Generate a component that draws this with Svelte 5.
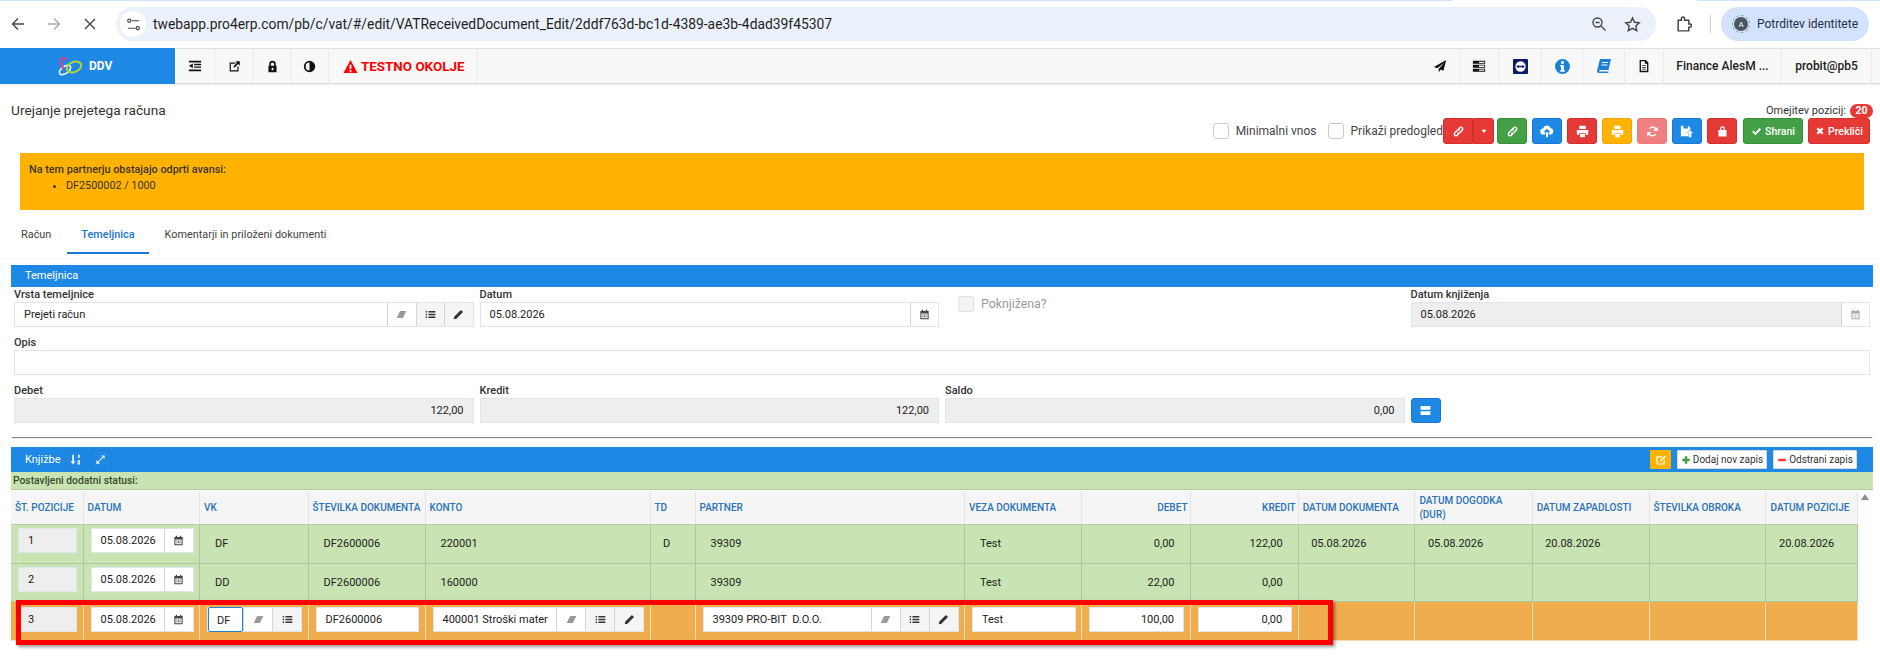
<script>
  // icon shapes on a 16x16 box: f = filled (evenodd), s = stroked
  const icons = {
    outdent: { f: 'M1 2h14v2H1z M7 5.5h8v1.5H7z M7 8.5h8V10H7z M1 12h14v2H1z M5.5 5v5.5L1 7.7z' },
    external: { f: 'M2 3h7v1.5H3.5v8h8V8H13v6H2z M9 1.5h5.5V7l-2-2L8 9.5 6.5 8 11 3.5z' },
    lock: { f: 'M4 7V5a4 4 0 0 1 8 0v2h1v8H3V7z M6 7h4V5a2 2 0 0 0-4 0z M7 9.5v3h2v-3z' },
    adjust: { f: 'M8 1a7 7 0 1 0 0 14A7 7 0 0 0 8 1z M8 3.2v9.6a4.8 4.8 0 0 1 0-9.6z' },
    warning: { f: 'M8 1l7.5 14H.5z M7 6v5h2V6z M7 12v2h2v-2z' },
    send: { f: 'M15 1L1 9l4 1.5L13 4 6.5 11.5V15l2.5-3 3 1.5z' },
    server: { f: 'M1 2h14v3.5H1z M1 6.5h14V10H1z M1 11h14v3.5H1z M8 3h6v1.5H8z M8 7.5h6V9H8z M8 12h6v1.5H8z' },
    info: { f: 'M8 0a8 8 0 1 0 0 16A8 8 0 0 0 8 0z M6.5 2.5h3V5h-3z M5.5 6.5h4V12h1v1.5h-5V12h1V8h-1z' },
    book: { f: 'M4 1h11l-2.5 11H3.5a1 1 0 0 0 0 1.5h9l-.3 1.5H3A2 2 0 0 1 1 13z M6 4l-.2 1h6l.2-1z M5.5 6.5l-.2 1h6l.2-1z' },
    file: { f: 'M3 1h7l3 3v11H3z M4.5 2.5v11h7v-8H9v-3z M6 7h4v1H6z M6 9h4v1H6z M6 11h4v1H6z' },
    link: { s: 'M7.5 5.5l2-2a2.100 2.100 0 0 1 3 3l-3 3a2.100 2.100 0 0 1-3 0 M8.500 10.500l-2 2a2.100 2.100 0 0 1-3-3l3-3a2.100 2.100 0 0 1 3 0' },
    caret: { f: 'M4 6h8l-4 5z' },
    cloud: { f: 'M4 12a3.5 3.5 0 0 1-.5-7A4.5 4.5 0 0 1 12 4.5 3.8 3.8 0 0 1 12 12h-2V9.5h2L8 5.5l-4 4h2V12z M6.8 9.5h2.4V15H6.8z' },
    print: { f: 'M4 1h8v4H4z M1 6h14v6h-3v-2H4v2H1z M5 11h6v4H5z' },
    refresh: { s: 'M13 6.5A5.2 5.2 0 0 0 4 4.5 M3 9.5a5.2 5.2 0 0 0 9 2', f: 'M14.5 2v5.5H9z M1.5 14V8.5H7z' },
    floppy: { f: 'M1 2h3v3h5V2h.5L12 4.500V6L7.500 10.500h2V14H1z M11.500 7l3.500 3.500h-2V15h-3v-4.500h-2z' },
    bag: { f: 'M5 6V4.500a3 3 0 0 1 6 0V6h2v8H3V6z M6.500 6h3V4.500a1.500 1.500 0 0 0-3 0z' },
    check: { f: 'M1.5 8.5l2-2 3 3 6-6.5 2 2L6.5 13.5z' },
    times: { f: 'M2.5 5l2.5-2.5 3 3 3-3L13.5 5l-3 3 3 3-2.5 2.500-3-3-3 3L2.500 11l3-3z' },
    eraser: { f: 'M6 3h9l-5 10H1z' },
    list: { f: 'M1 3h2v2H1z M5 3h10v2H5z M1 7h2v2H1z M5 7h10v2H5z M1 11h2v2H1z M5 11h10v2H5z' },
    pencil: { f: 'M11.500 1.500l3 3L5 14l-4 1 1-4z' },
    calendar: { f: 'M2 3h2V1h2v2h4V1h2v2h2v12H2z M3.500 6.500v7h9v-7z M5 8h1.500v1.500H5z M7.300 8h1.500v1.500H7.300z M9.500 8H11v1.500H9.500z M5 10.500h1.500V12H5z M7.300 10.500h1.500V12H7.300z M9.500 10.500H11V12H9.500z' },
    equals: { f: 'M2 2.500h12v4.500H2z M2 9h12v4.500H2z' },
    sort: { f: 'M4 2h2v8h2l-3 4-3-4h2z M11 2h2v4h-2z M10.500 9h3v5h-3z M11.500 10.500v2h1v-2z' },
    expand: { f: 'M9 2h5v5l-2-2-7 7 2 2H2V9l2 2 7-7z' },
    edit: { f: 'M2 3h8L8.500 4.500h-5v8h8v-4L13 7v7H2z M13 2l1.500 1.500L8 10H6.500V8.500z' },
    plus: { f: 'M6 2h4v4h4v4h-4v4H6v-4H2V6h4z' },
    minus: { f: 'M2 6h12v4H2z' }
  };

  const columns = [
    { label: 'Št. pozicije', w: 72.5 },
    { label: 'Datum', w: 116.5 },
    { label: 'VK', w: 108.5 },
    { label: 'Številka dokumenta', w: 117 },
    { label: 'Konto', w: 225 },
    { label: 'TD', w: 45 },
    { label: 'Partner', w: 269.5 },
    { label: 'Veza dokumenta', w: 117 },
    { label: 'Debet', w: 108.5, right: true },
    { label: 'Kredit', w: 108.2, right: true },
    { label: 'Datum dokumenta', w: 116.7 },
    { label: 'Datum dogodka (DUR)', w: 117.3 },
    { label: 'Datum zapadlosti', w: 116.9 },
    { label: 'Številka obroka', w: 116.9 },
    { label: 'Datum pozicije', w: 91.5 }
  ];
  const gridCols = columns.map((c) => c.w + 'px').join(' ');

  const rows = [
    { poz: '1', vk: 'DF', doc: 'DF2600006', konto: '220001', td: 'D', partner: '39309', veza: 'Test', debet: '0,00', kredit: '122,00', d1: '05.08.2026', d2: '05.08.2026', d3: '20.08.2026', obrok: '', d4: '20.08.2026' },
    { poz: '2', vk: 'DD', doc: 'DF2600006', konto: '160000', td: '', partner: '39309', veza: 'Test', debet: '22,00', kredit: '0,00', d1: '', d2: '', d3: '', obrok: '', d4: '' }
  ];
</script>

{#snippet icon(name, size = 12)}
  <svg class="ico" viewBox="0 0 16 16" width={size} height={size} aria-hidden="true">
    {#if icons[name].s}
      <path d={icons[name].s} fill="none" stroke="currentColor" stroke-width="1.800" />
    {/if}
    {#if icons[name].f}
      <path d={icons[name].f} fill="currentColor" fill-rule="evenodd" />
    {/if}
  </svg>
{/snippet}

{#snippet addons(list)}
  {#each list as a}
    <span class="addon" class:shaded={a !== 'eraser' && a !== 'calendar'} class:soft={a === 'eraser'}>{@render icon(a, 11)}</span>
  {/each}
{/snippet}

{#snippet dateInput()}
  <div class="field"><span class="value">05.08.2026</span>{@render addons(['calendar'])}</div>
{/snippet}

<div class="page">
  <header class="browser">
    <div class="strip"><span class="strip-a"></span><span class="strip-b"></span></div>
    <div class="browser-row">
      <div class="nav-btns">
        <svg viewBox="0 0 16 16" width="16" height="16"><path d="M14 8H2.500M8 2.500L2.500 8 8 13.500" fill="none" stroke="#444" stroke-width="1.400" /></svg>
        <svg viewBox="0 0 16 16" width="16" height="16"><path d="M2 8h11.500M8 2.500L13.500 8 8 13.500" fill="none" stroke="#aaa" stroke-width="1.400" /></svg>
        <svg viewBox="0 0 16 16" width="16" height="16"><path d="M3 3l10 10M13 3L3 13" fill="none" stroke="#444" stroke-width="1.400" /></svg>
      </div>
      <div class="address">
        <span class="tune">
          <svg viewBox="0 0 16 16" width="15" height="15"><path d="M6 4h8M2 12h8" fill="none" stroke="#444" stroke-width="1.300" /><circle cx="3.500" cy="4" r="1.700" fill="none" stroke="#444" stroke-width="1.200" /><circle cx="12.500" cy="12" r="1.700" fill="none" stroke="#444" stroke-width="1.200" /></svg>
        </span>
        <span class="url">twebapp.pro4erp.com/pb/c/vat/#/edit/VATReceivedDocument_Edit/2ddf763d-bc1d-4389-ae3b-4dad39f45307</span>
        <span class="addr-icons">
          <svg viewBox="0 0 16 16" width="16" height="16"><circle cx="6.500" cy="6.500" r="4.500" fill="none" stroke="#444" stroke-width="1.400" /><path d="M10 10l4.500 4.500M4.500 6.500h4" fill="none" stroke="#444" stroke-width="1.400" /></svg>
          <svg viewBox="0 0 16 16" width="17" height="17"><path d="M8 1.800l1.900 4.100 4.500.5-3.300 3 .9 4.400L8 11.600l-4 2.200.9-4.400-3.300-3 4.500-.5z" fill="none" stroke="#444" stroke-width="1.300" /></svg>
        </span>
      </div>
      <svg class="puzzle" viewBox="0 0 16 16" width="17" height="17"><path d="M3 4h3V2.500a1.500 1.500 0 0 1 3 0V4h4v3.500h1a1.500 1.500 0 0 1 0 3h-1V14H3z" fill="none" stroke="#444" stroke-width="1.400" /></svg>
      <span class="divider"></span>
      <div class="profile">
        <span class="avatar">A</span>
        <span>Potrditev identitete</span>
      </div>
    </div>
  </header>

  <nav class="topnav">
    <div class="brand">
      <svg viewBox="0 0 26 20" width="26" height="20">
        <ellipse cx="8" cy="14" rx="6.500" ry="3.500" transform="rotate(-35 8 14)" fill="none" stroke="#e6f0ff" stroke-width="1.700" />
        <path d="M7 13C2 8 3 2 6 2c2 0 3 1 4 2.500" fill="none" stroke="#d6408f" stroke-width="2" />
        <ellipse cx="17" cy="11" rx="7.500" ry="5" transform="rotate(-22 17 11)" fill="none" stroke="#b6d334" stroke-width="2" />
      </svg>
      <b>DDV</b>
    </div>
    <span class="nav-item w40">{@render icon('outdent', 14)}</span>
    <span class="nav-item w39">{@render icon('external', 13)}</span>
    <span class="nav-item w37">{@render icon('lock', 13)}</span>
    <span class="nav-item w38">{@render icon('adjust', 13)}</span>
    <span class="nav-item testno"><span class="warn">{@render icon('warning', 15)}</span>TESTNO OKOLJE</span>
    <span class="nav-fill"></span>
    <span class="nav-item w40">{@render icon('send', 14)}</span>
    <span class="nav-item w39">{@render icon('server', 14)}</span>
    <span class="nav-item w43">
      <svg viewBox="0 0 16 16" width="15" height="15"><rect width="16" height="16" rx="1" fill="#0c1a6b" /><circle cx="8" cy="8" r="5.500" fill="#fff" /><path d="M3.500 8L6 6v1.200h4V6l2.500 2L10 10V8.800H6V10z" fill="#0c1a6b" /></svg>
    </span>
    <span class="nav-item w41 blue">{@render icon('info', 15)}</span>
    <span class="nav-item w42 blue">{@render icon('book', 16)}</span>
    <span class="nav-item w39">{@render icon('file', 14)}</span>
    <span class="nav-item user w118">Finance AlesM ...</span>
    <span class="nav-item user w90">probit@pb5</span>
    <span class="nav-end"></span>
  </nav>

  <section class="toolbar">
    <h1>Urejanje prejetega računa</h1>
    <div class="tools">
      <div class="limit">Omejitev pozicij: <span class="badge">20</span></div>
      <div class="actions">
        <label class="check"><input type="checkbox" />Minimalni vnos</label>
        <label class="check second"><input type="checkbox" />Prikaži predogled</label>
        <div class="split">
          <button class="btn red">{@render icon('link', 13)}</button>
          <button class="btn red caret">{@render icon('caret', 10)}</button>
        </div>
        <button class="btn green">{@render icon('link', 13)}</button>
        <button class="btn blue-btn">{@render icon('cloud', 14)}</button>
        <button class="btn red">{@render icon('print', 13)}</button>
        <button class="btn amber">{@render icon('print', 13)}</button>
        <button class="btn salmon">{@render icon('refresh', 13)}</button>
        <button class="btn blue-btn">{@render icon('floppy', 14)}</button>
        <button class="btn red">{@render icon('bag', 13)}</button>
        <button class="btn green wide">{@render icon('check', 11)} Shrani</button>
        <button class="btn red wide2">{@render icon('times', 10)} Prekliči</button>
      </div>
    </div>
  </section>

  <div class="alert">
    <strong>Na tem partnerju obstajajo odprti avansi:</strong>
    <ul><li>DF2500002 / 1000</li></ul>
  </div>

  <div class="tabs">
    <span class="tab">Račun</span>
    <span class="tab active">Temeljnica</span>
    <span class="tab">Komentarji in priloženi dokumenti</span>
  </div>

  <section class="panel">
    <div class="bar">Temeljnica</div>
    <div class="form">
      <div class="group">
        <span class="lbl">Vrsta temeljnice</span>
        <div class="field"><span class="value">Prejeti račun</span>{@render addons(['eraser', 'list', 'pencil'])}</div>
      </div>
      <div class="group">
        <span class="lbl">Datum</span>
        {@render dateInput()}
      </div>
      <div class="group poknjizena">
        <label class="check muted"><input type="checkbox" disabled />Poknjižena?</label>
      </div>
      <div class="group">
        <span class="lbl">Datum knjiženja</span>
        <div class="field off"><span class="value">05.08.2026</span><span class="addon pale">{@render icon('calendar', 11)}</span></div>
      </div>
      <div class="group full">
        <span class="lbl">Opis</span>
        <div class="field"><span class="value"></span></div>
      </div>
      <div class="group">
        <span class="lbl">Debet</span>
        <div class="field off"><span class="value num">122,00</span></div>
      </div>
      <div class="group">
        <span class="lbl">Kredit</span>
        <div class="field off"><span class="value num">122,00</span></div>
      </div>
      <div class="group">
        <span class="lbl">Saldo</span>
        <div class="field off"><span class="value num">0,00</span></div>
      </div>
      <div class="group">
        <span class="lbl">&nbsp;</span>
        <button class="btn blue-btn eq">{@render icon('equals', 13)}</button>
      </div>
    </div>
  </section>

  <section class="entries">
    <div class="bar entries-bar">
      <span>Knjižbe</span>
      <span class="bar-btn">{@render icon('sort', 13)}</span>
      <span class="bar-btn">{@render icon('expand', 11)}</span>
      <span class="bar-fill"></span>
      <span class="mini amber">{@render icon('edit', 12)}</span>
      <span class="mini plain add"><span class="plus">{@render icon('plus', 10)}</span>Dodaj nov zapis</span>
      <span class="mini plain del"><span class="minus">{@render icon('minus', 10)}</span>Odstrani zapis</span>
    </div>
    <div class="statuses">Postavljeni dodatni statusi:</div>
    <div class="scroller">
      <div class="table">
        <div class="row head" style="grid-template-columns: {gridCols}">
          {#each columns as c}
            <div class="th" class:right={c.right}>{c.label}</div>
          {/each}
        </div>

        {#each rows as r}
          <div class="row body" style="grid-template-columns: {gridCols}">
            <div class="td box"><div class="field off"><span class="value">{r.poz}</span></div></div>
            <div class="td box">{@render dateInput()}</div>
            <div class="td">{r.vk}</div>
            <div class="td">{r.doc}</div>
            <div class="td">{r.konto}</div>
            <div class="td tight">{r.td}</div>
            <div class="td">{r.partner}</div>
            <div class="td">{r.veza}</div>
            <div class="td end">{r.debet}</div>
            <div class="td end">{r.kredit}</div>
            <div class="td tight">{r.d1}</div>
            <div class="td tight">{r.d2}</div>
            <div class="td tight">{r.d3}</div>
            <div class="td tight">{r.obrok}</div>
            <div class="td tight">{r.d4}</div>
          </div>
        {/each}

        <div class="row body editing" style="grid-template-columns: {gridCols}">
          <div class="td box"><div class="field off"><span class="value">3</span></div></div>
          <div class="td box">{@render dateInput()}</div>
          <div class="td box">
            <div class="field"><span class="value focused">DF</span>{@render addons(['eraser', 'list'])}</div>
          </div>
          <div class="td box"><div class="field"><span class="value">DF2600006</span></div></div>
          <div class="td box">
            <div class="field"><span class="value clip">400001 Stroški materiala</span>{@render addons(['eraser', 'list', 'pencil'])}</div>
          </div>
          <div class="td"></div>
          <div class="td box">
            <div class="field"><span class="value">39309 PRO-BIT&nbsp; D.O.O.</span>{@render addons(['eraser', 'list', 'pencil'])}</div>
          </div>
          <div class="td box"><div class="field"><span class="value">Test</span></div></div>
          <div class="td box"><div class="field"><span class="value num">100,00</span></div></div>
          <div class="td box"><div class="field"><span class="value num">0,00</span></div></div>
          <div class="td"></div>
          <div class="td"></div>
          <div class="td"></div>
          <div class="td"></div>
          <div class="td"></div>
          <div class="marker"></div>
        </div>
      </div>
      <div class="scrollbar"><span class="arrow"></span></div>
    </div>
  </section>
</div>

<style>
  :global(body) {
    margin: 0;
    background: #fff;
    overflow: hidden;
  }

  .page {
    width: 1880px;
    height: 656px;
    overflow: hidden;
    font-family: Roboto, "Liberation Sans", sans-serif;
    font-size: 12px;
    color: #333;
  }

  .ico {
    display: block;
    flex: none;
  }

  /* browser chrome */
  .browser {
    height: 48px;
    background: #fff;
  }

  .strip {
    display: flex;
    justify-content: space-between;
    height: 1px;
  }

  .strip-a {
    width: 1452px;
    background: #d3e3fd;
  }

  .strip-b {
    width: 183px;
    background: #d3e3fd;
  }

  .browser-row {
    display: flex;
    align-items: center;
    height: 34px;
    margin-top: 6px;
  }

  .nav-btns {
    display: flex;
    gap: 20px;
    width: 116px;
    padding-left: 10px;
    box-sizing: border-box;
  }

  .address {
    display: flex;
    align-items: center;
    width: 1540px;
    height: 34px;
    border-radius: 17px;
    background: #ebf1fa;
  }

  .tune {
    display: flex;
    align-items: center;
    justify-content: center;
    width: 26px;
    height: 26px;
    margin-left: 4px;
    border-radius: 50%;
    background: #fff;
  }

  .url {
    margin-left: 7px;
    font-size: 13.850px;
    color: #1f1f1f;
  }

  .addr-icons {
    display: flex;
    align-items: center;
    gap: 17px;
    margin-left: auto;
    margin-right: 15px;
  }

  .puzzle {
    margin-left: 19px;
  }

  .divider {
    width: 1px;
    height: 18px;
    margin: 0 10px 0 18px;
    background: #c9ccd1;
  }

  .profile {
    display: flex;
    align-items: center;
    gap: 9px;
    width: 148px;
    height: 34px;
    padding-left: 13px;
    box-sizing: border-box;
    border-radius: 17px;
    background: #d3e3fd;
    font-size: 12px;
    color: #1f2d45;
    white-space: nowrap;
  }

  .avatar {
    display: flex;
    align-items: center;
    justify-content: center;
    flex: none;
    width: 14px;
    height: 14px;
    border-radius: 50%;
    background: #4a5560;
    outline: 1px dashed #7d93b2;
    outline-offset: 1px;
    font-size: 8px;
    color: #fff;
  }

  /* app navbar */
  .topnav {
    display: flex;
    height: 36px;
    box-sizing: border-box;
    background: #f8f8f8;
    border-top: 1px solid #e2e2e2;
    border-bottom: 1px solid #dcdcdc;
    box-shadow: 0 1px 2px rgba(0, 0, 0, 0.08);
    color: #111;
  }

  .brand {
    display: flex;
    align-items: center;
    gap: 6px;
    width: 175px;
    padding-left: 57px;
    box-sizing: border-box;
    margin-top: -1px;
    height: 36px;
    background: #1e88e5;
    color: #fff;
  }

  .brand b {
    font-size: 12px;
  }

  .nav-item {
    display: flex;
    align-items: center;
    justify-content: center;
    box-sizing: border-box;
    border-right: 1px solid #ebebeb;
  }

  .nav-fill {
    flex: 1;
  }

  .nav-end {
    width: 8px;
  }

  .w37 { width: 37px; }
  .w38 { width: 38px; }
  .w39 { width: 39px; }
  .w40 { width: 40px; }
  .w41 { width: 41px; }
  .w42 { width: 42px; }
  .w43 { width: 43px; }
  .w90 { width: 90px; }
  .w118 { width: 118px; }

  .blue {
    color: #1e7fd6;
  }

  .testno {
    gap: 3px;
    justify-content: flex-start;
    width: 149px;
    padding-left: 14px;
    font-size: 13.400px;
    font-weight: 700;
    color: #f00;
  }

  .warn {
    color: #f00;
  }

  .user {
    font-size: 12px;
    font-weight: 500;
    color: #222;
    white-space: nowrap;
  }

  /* title + actions */
  .toolbar {
    display: flex;
    justify-content: space-between;
    height: 69px;
    padding: 19px 10px 0 11px;
    box-sizing: border-box;
  }

  h1 {
    margin: 0;
    font-size: 13.700px;
    font-weight: 400;
    line-height: 14px;
    color: #333;
  }

  .tools {
    display: flex;
    flex-direction: column;
    align-items: flex-end;
  }

  .limit {
    display: flex;
    align-items: center;
    gap: 4px;
    height: 15px;
    margin-right: -3px;
    font-size: 11px;
  }

  .badge {
    width: 23px;
    height: 14px;
    border-radius: 8px;
    background: #e53935;
    font-size: 10.500px;
    font-weight: 700;
    line-height: 14px;
    text-align: center;
    color: #fff;
  }

  .actions {
    display: flex;
    align-items: center;
    gap: 5px;
    height: 26px;
  }

  .check {
    display: flex;
    align-items: center;
    gap: 7px;
    font-size: 12px;
    color: #444;
  }

  .check.second {
    margin-left: 6px;
    margin-right: -5px;
  }

  .check input {
    appearance: none;
    width: 16px;
    height: 16px;
    margin: 0;
    border: 1px solid #ccc;
    border-radius: 3px;
    background: #fff;
  }

  .btn {
    display: flex;
    align-items: center;
    justify-content: center;
    gap: 3px;
    width: 30px;
    height: 26px;
    padding: 0;
    box-sizing: border-box;
    border: 1px solid transparent;
    border-radius: 3px;
    font-family: inherit;
    font-size: 10.500px;
    font-weight: 500;
    color: #fff;
  }

  .btn.red { background: #e53935; border-color: #d32f2f; }
  .btn.green { background: #43a047; border-color: #388e3c; }
  .btn.blue-btn { background: #1e88e5; border-color: #1976d2; }
  .btn.amber { background: #ffb300; border-color: #f0a500; }
  .btn.salmon { background: #f08080; border-color: #ef7a7a; }

  .btn.wide { width: 60px; margin-left: 1px; }
  .btn.wide2 { width: 62px; }

  .split {
    display: flex;
    margin-right: -2px;
  }

  .split .btn { border-radius: 3px 0 0 3px; }
  .split .btn.caret { width: 21px; border-radius: 0 3px 3px 0; }

  .alert {
    height: 57px;
    margin: 0 16px 0 20px;
    padding: 9px 9px 0;
    box-sizing: border-box;
    background: #ffb300;
    font-size: 10.800px;
    line-height: 16px;
    color: #3d3320;
  }

  .alert strong {
    font-weight: 500;
  }

  .alert ul {
    margin: 0;
    padding-left: 37px;
  }

  /* tabs */
  .tabs {
    display: flex;
    gap: 2px;
    height: 49px;
    padding-left: 7px;
    box-sizing: border-box;
    border-bottom: 1px solid #f4f4f4;
    font-size: 10.900px;
    color: #444;
  }

  .tab {
    height: 44px;
    padding: 17px 14px 0;
    box-sizing: border-box;
    line-height: 16px;
  }

  .tab.active {
    border-bottom: 2px solid #1976d2;
    font-weight: 500;
    color: #1976d2;
  }

  /* header form */
  .panel {
    margin: 6px 7px 0 11px;
    padding-bottom: 14px;
    box-shadow: 0 2px 1px -1px rgba(0, 0, 0, 0.45);
  }

  .bar {
    height: 22px;
    padding-left: 14px;
    background: #1e88e5;
    font-size: 11px;
    line-height: 22px;
    color: #fff;
  }

  .form {
    display: grid;
    grid-template-columns: repeat(4, 1fr);
    gap: 8px 6px;
    padding: 0 3px;
  }

  .group {
    display: flex;
    flex-direction: column;
    min-width: 0;
  }

  .group.full {
    grid-column: 1 / -1;
  }

  .group.poknjizena {
    justify-content: flex-start;
    padding: 9px 0 0 13px;
  }

  .lbl {
    height: 15px;
    font-size: 11px;
    font-weight: 500;
    line-height: 15px;
    color: #333;
  }

  .check.muted {
    gap: 7px;
    font-size: 12.300px;
    color: #999;
  }

  .check.muted input {
    background: #f2f2f2;
    border-color: #e0e0e0;
  }

  .field {
    display: flex;
    height: 25px;
    box-sizing: border-box;
    border: 1px solid #dde6ee;
    background: #fff;
    font-size: 11px;
    line-height: 23px;
    color: #222;
  }

  .field.off {
    background: #eee;
  }

  .value {
    flex: 1;
    min-width: 0;
    padding: 0 9px;
    white-space: nowrap;
  }

  .value.num {
    text-align: right;
  }

  .value.clip {
    overflow: hidden;
    padding-right: 0;
    margin-right: 8px;
  }

  .value.focused {
    flex: none;
    width: 35px;
    margin: -1px 0;
    padding: 1px 0 0 8px;
    box-sizing: border-box;
    border: 1.500px solid #1e80d8;
    border-radius: 2px;
  }

  .addon {
    display: flex;
    align-items: center;
    justify-content: center;
    flex: none;
    width: 28.500px;
    box-sizing: border-box;
    border-left: 1px solid #d5d5d5;
    background: #fff;
    color: #444;
  }

  .addon.shaded {
    background: #f5f5f5;
    color: #333;
  }

  .addon.soft {
    color: #999;
  }

  .addon.pale {
    color: #aaa;
  }

  .eq {
    width: 30px;
    height: 25px;
  }

  /* entries grid */
  .entries {
    margin: 10px 7px 0 11px;
  }

  .entries-bar {
    display: flex;
    align-items: center;
    gap: 3px;
    height: 25px;
    padding-right: 16px;
  }

  .bar-btn {
    display: flex;
    align-items: center;
    justify-content: center;
    width: 20px;
    height: 18px;
    margin-left: 2px;
    border-radius: 2px;
    box-shadow: 0 0 0 1px rgba(0, 0, 0, 0.05);
  }

  .bar-fill {
    flex: 1;
  }

  .mini {
    display: flex;
    align-items: center;
    justify-content: center;
    gap: 2px;
    height: 19px;
    box-sizing: border-box;
    border-radius: 1px;
  }

  .mini.amber {
    width: 21px;
    background: #ffb300;
    color: #fff;
    margin-right: 3px;
  }

  .mini.plain {
    background: #fff;
    border: 1px solid #ddd;
    font-size: 10px;
    color: #333;
  }

  .mini.add {
    width: 90px;
    margin-right: 3px;
  }

  .mini.del {
    width: 84px;
  }

  .plus { color: #43a047; }
  .minus { color: #f33; }

  .statuses {
    height: 18px;
    padding-left: 2px;
    box-sizing: border-box;
    background: #cae3b3;
    border-bottom: 1px solid #b3c8a2;
    font-size: 10.300px;
    font-weight: 500;
    line-height: 17px;
    color: #3a4a2c;
  }

  .scroller {
    display: flex;
    padding-top: 1px;
  }

  .table {
    width: 1847px;
  }

  .scrollbar {
    width: 15px;
    padding-top: 3px;
    background: #fdfdfd;
  }

  .arrow {
    display: block;
    width: 0;
    margin: 0 auto;
    border: 4.500px solid transparent;
    border-top: 0;
    border-bottom: 6px solid #8e8e8e;
    transform: translateX(-1px);
  }

  .row {
    display: grid;
  }

  .row.head {
    height: 34px;
    background: #f5f5f5;
  }

  .th {
    display: flex;
    align-items: center;
    padding: 0 2px 0 4px;
    border-right: 1px solid #e4e4e4;
    border-bottom: 1px solid #b9c9ab;
    font-size: 10px;
    font-weight: 500;
    line-height: 14px;
    text-transform: uppercase;
    color: #2a73b8;
    min-width: 0;
  }

  .th.right {
    justify-content: flex-end;
  }

  .row.body {
    height: 38.500px;
    background: #cae3b3;
  }

  .td {
    display: flex;
    align-items: center;
    min-width: 0;
    padding: 0 15px;
    box-sizing: border-box;
    border-right: 1px solid #adc69c;
    border-bottom: 1px solid #adc69c;
    font-size: 11px;
    color: #222;
    white-space: nowrap;
  }

  .td.tight {
    padding: 0 12.500px;
  }

  .td.end {
    justify-content: flex-end;
  }

  .td.box {
    display: block;
    padding: 3px 5.500px 0 7px;
  }

  .editing {
    position: relative;
    height: 39px !important;
    background: #f0ad4e !important;
  }

  .editing .td {
    border-color: #f7dcb2;
  }

  .editing .td.box {
    padding-top: 5px;
  }

  .editing .addon {
    width: 29px;
  }

  /* red annotation drawn over the row */
  .marker {
    position: absolute;
    left: 5px;
    top: -2px;
    width: 1317px;
    height: 45px;
    box-sizing: border-box;
    border: 5px solid #f00;
    box-shadow: 2px 2px 3px rgba(0, 0, 0, 0.4);
    pointer-events: none;
  }
</style>
